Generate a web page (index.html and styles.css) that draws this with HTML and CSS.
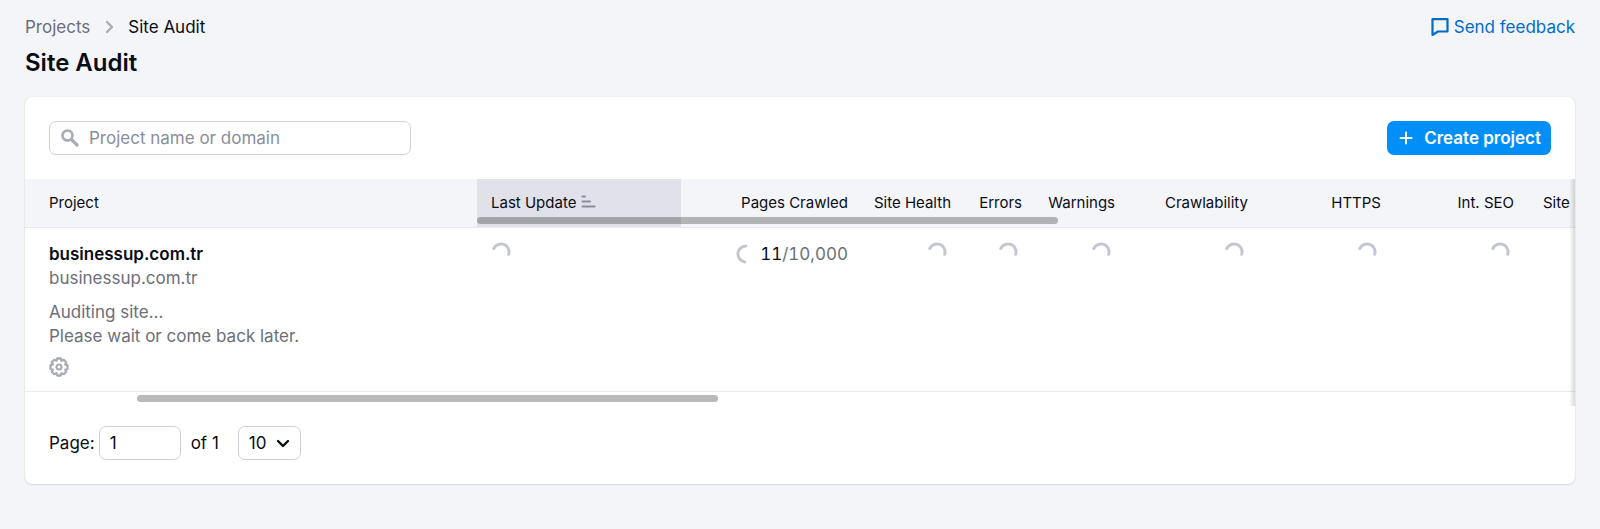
FILE: index.html
```html
<!DOCTYPE html>
<html lang="en">
  <head>
    <meta charset="utf-8">
    <title>Site Audit</title>
    <link rel="stylesheet" href="styles.css">
  </head>
  <body>
    <svg class="sprite" width="0" height="0" aria-hidden="true">
      <symbol id="spinner" viewBox="0 0 20 20">
        <path d="M2.800 6.500A8 8 0 0 1 17.700 12.200" fill="none" stroke="currentColor" stroke-width="3" stroke-linecap="round" />
      </symbol>
    </svg>

    <header class="page-header">
      <div class="header-top">
        <nav class="breadcrumbs" aria-label="Breadcrumb">
          <a href="#">Projects</a>
          <svg width="10" height="14" viewBox="0 0 10 14"><path d="M3 2L8 7L3 12" fill="none" stroke="#a9abb6" stroke-width="2.300" stroke-linecap="round" stroke-linejoin="round" /></svg>
          <span>Site Audit</span>
        </nav>
        <a class="feedback" href="#">
          <svg width="18" height="18" viewBox="0 0 18 18"><path d="M1.500 1.200H16.500V13.500H7L1.500 17Z" fill="none" stroke="currentColor" stroke-width="2.200" stroke-linejoin="round" /></svg>
          Send feedback
        </a>
      </div>
      <h1>Site Audit</h1>
    </header>

    <main class="card">
      <div class="toolbar">
        <label class="search">
          <svg width="18" height="18" viewBox="0 0 18 18"><circle cx="6.500" cy="6.500" r="5" fill="none" stroke="currentColor" stroke-width="2.600" /><path d="M10.500 10.500L16 16" stroke="currentColor" stroke-width="3.200" stroke-linecap="round" /></svg>
          <input type="text" placeholder="Project name or domain" aria-label="Project name or domain">
        </label>
        <button class="create" type="button">
          <svg width="14" height="14" viewBox="0 0 14 14"><path d="M7 1.500V12.500M1.500 7H12.500" stroke="currentColor" stroke-width="2" stroke-linecap="round" /></svg>
          Create project
        </button>
      </div>

      <div class="table-wrap">
        <div class="table-scroll">
          <table>
            <colgroup>
              <col class="col-project">
              <col class="col-update">
              <col class="col-pages">
              <col class="col-health">
              <col class="col-errors">
              <col class="col-warnings">
              <col class="col-score">
              <col class="col-score">
              <col class="col-score">
              <col class="col-score">
            </colgroup>
            <thead>
              <tr>
                <th class="left">Project</th>
                <th class="left sorted">
                  Last Update
                  <svg width="15" height="13" viewBox="0 0 15 13"><path d="M1.500 1.500H4M1.500 6.500H9M1.500 11.500H13.500" stroke="currentColor" stroke-width="2.200" stroke-linecap="round" /></svg>
                </th>
                <th>Pages Crawled</th>
                <th>Site Health</th>
                <th>Errors</th>
                <th>Warnings</th>
                <th>Crawlability</th>
                <th>HTTPS</th>
                <th>Int. SEO</th>
                <th class="left">Site Perf.</th>
              </tr>
            </thead>
            <tbody>
              <tr>
                <td class="left">
                  <a class="project-name" href="#">businessup.com.tr</a>
                  <div class="muted">businessup.com.tr</div>
                  <div class="status muted">Auditing site...<br>Please wait or come back later.</div>
                  <button class="settings" type="button" aria-label="Settings">
                    <svg width="20" height="20" viewBox="0 0 20 20"><path d="M8.200 1.500H11.800L12.500 3.800L14.700 2.800L17.200 5.300L16.200 7.500L18.500 8.200V11.800L16.200 12.500L17.200 14.700L14.700 17.200L12.500 16.200L11.800 18.500H8.200L7.500 16.200L5.300 17.200L2.800 14.700L3.800 12.500L1.500 11.800V8.200L3.800 7.500L2.800 5.300L5.300 2.800L7.500 3.800Z" fill="none" stroke="currentColor" stroke-width="2.300" stroke-linejoin="round" /><circle cx="10" cy="10" r="2.500" fill="none" stroke="currentColor" stroke-width="2.200" /></svg>
                  </button>
                </td>
                <td class="left"><svg class="spinner"><use href="#spinner" /></svg></td>
                <td>
                  <div class="crawled">
                    <svg class="spinner turned"><use href="#spinner" /></svg>
                    <span>11<span class="muted">/10,000</span></span>
                  </div>
                </td>
                <td class="loading"><svg class="spinner"><use href="#spinner" /></svg></td>
                <td class="loading"><svg class="spinner"><use href="#spinner" /></svg></td>
                <td class="loading"><svg class="spinner"><use href="#spinner" /></svg></td>
                <td class="loading"><svg class="spinner"><use href="#spinner" /></svg></td>
                <td class="loading"><svg class="spinner"><use href="#spinner" /></svg></td>
                <td class="loading"><svg class="spinner"><use href="#spinner" /></svg></td>
                <td></td>
              </tr>
            </tbody>
          </table>
        </div>
        <div class="thumb thumb-top"></div>
        <div class="thumb thumb-bottom"></div>
      </div>

      <form class="pagination">
        <label for="page">Page:</label>
        <input id="page" type="text" value="1">
        <span class="total">of 1</span>
        <span class="select">
          <select aria-label="Rows per page">
            <option>10</option>
            <option>20</option>
            <option>50</option>
          </select>
          <svg width="14" height="9" viewBox="0 0 14 9"><path d="M2 2L7 7L12 2" fill="none" stroke="currentColor" stroke-width="2.400" stroke-linecap="round" stroke-linejoin="round" /></svg>
        </span>
      </form>
    </main>
  </body>
</html>
```

FILE: styles.css
```css
* {
  box-sizing: border-box;
}
body {
  margin: 0;
  padding: 14px 25px 46px;
  background-color: #f4f5f9;
  color: #0a0c14;
  font-family: Inter, sans-serif;
  font-size: 17px;
  line-height: 24px;
}
a {
  color: inherit;
  text-decoration: none;
}
svg {
  flex: none;
}
input,
select,
button {
  font: inherit;
  color: inherit;
}
.sprite {
  position: absolute;
}
.muted {
  color: #6c6e79;
}

/* Header */
.header-top {
  display: flex;
  justify-content: space-between;
  line-height: 26px;
}
.breadcrumbs {
  display: flex;
  align-items: center;
  gap: 14px;
}
.breadcrumbs a {
  color: #6c6e79;
}
.feedback {
  display: flex;
  align-items: center;
  gap: 5px;
  color: #006dca;
}
h1 {
  margin: 6px 0 17px;
  font-size: 24px;
  font-weight: 600;
  line-height: 34px;
}

/* Card */
.card {
  background: #fff;
  border-radius: 7px;
  box-shadow: 0 0 1px rgba(25, 27, 35, 0.16), 0 1px 2px rgba(25, 27, 35, 0.12);
}
.toolbar {
  display: flex;
  justify-content: space-between;
  padding: 24px;
}
.search {
  position: relative;
  width: 362px;
}
.search svg {
  position: absolute;
  left: 12px;
  top: 8px;
  color: #a9abb6;
}
.search input {
  width: 100%;
  padding: 0 12px 0 39px;
}
.search input::placeholder {
  color: #8a8e9b;
  opacity: 1;
}
.search input,
.pagination input,
.pagination select {
  display: block;
  height: 34px;
  background: #fff;
  border: 1px solid #cfd1d9;
  border-radius: 7px;
}
.create {
  display: flex;
  align-items: center;
  gap: 11px;
  height: 34px;
  padding: 0 10px 0 12px;
  background: #008ff8;
  border: 0;
  border-radius: 7px;
  color: #fff;
  font-weight: 600;
}

/* Table */
.table-wrap {
  position: relative;
  padding-bottom: 14px;
}
.table-wrap::after {
  content: "";
  position: absolute;
  top: 0;
  right: 0;
  bottom: 0;
  width: 6px;
  background: linear-gradient(to left, rgba(25, 27, 35, 0.16), rgba(25, 27, 35, 0));
}
.table-scroll {
  overflow: hidden;
}
table {
  width: 1637px;
  table-layout: fixed;
  border-collapse: collapse;
}
.col-project {
  width: 452px;
}
.col-update {
  width: 204px;
}
.col-pages {
  width: 182px;
}
.col-health {
  width: 103px;
}
.col-errors {
  width: 71px;
}
.col-warnings {
  width: 93px;
}
.col-score {
  width: 133px;
}
th {
  height: 48px;
  padding: 0 15px 0 10px;
  background: #f4f5f9;
  font-size: 15px;
  font-weight: 400;
  line-height: 20px;
  text-align: right;
  white-space: nowrap;
}
th.sorted {
  background: #e0e1e9;
}
th.sorted svg {
  color: #8a8e9b;
}
td {
  padding: 14px 15px 14px 10px;
  text-align: right;
  vertical-align: top;
}
th.left,
td.left {
  padding-left: 14px;
  text-align: left;
}
th.left:first-child,
td.left:first-child {
  padding-left: 24px;
}
tr {
  border-bottom: 1px solid #e9eaef;
}
td.loading {
  padding-right: 19px;
}
.project-name {
  font-weight: 600;
}
.status {
  margin-top: 10px;
}
.settings {
  display: block;
  margin-top: 9px;
  padding: 0;
  background: none;
  border: 0;
  color: #a9abb6;
}
.settings svg {
  display: block;
}
.spinner {
  width: 20px;
  height: 20px;
  color: #c4c7cf;
}
td > .spinner {
  display: block;
}
td.loading > .spinner {
  margin-left: auto;
}
.spinner.turned {
  transform: rotate(-107deg);
}
.crawled {
  display: flex;
  align-items: center;
  justify-content: flex-end;
  gap: 4px;
  font-variant-numeric: tabular-nums;
}
.thumb {
  position: absolute;
  width: 37.5%;
  height: 7px;
  border-radius: 4px;
  background: rgba(0, 0, 0, 0.27);
}
.thumb-top {
  top: 38px;
  left: 452px;
}
.thumb-bottom {
  bottom: 4px;
  left: 112px;
}

/* Pagination */
.pagination {
  display: flex;
  align-items: center;
  padding: 20px 24px 24px;
}
.pagination input {
  width: 82px;
  margin-left: 4px;
  padding: 0 10px;
}
.total {
  margin: 0 19px 0 10px;
}
.select {
  position: relative;
}
.select select {
  width: 63px;
  padding: 0 10px;
  appearance: none;
}
.select svg {
  position: absolute;
  top: 13px;
  right: 11px;
  pointer-events: none;
}
```
